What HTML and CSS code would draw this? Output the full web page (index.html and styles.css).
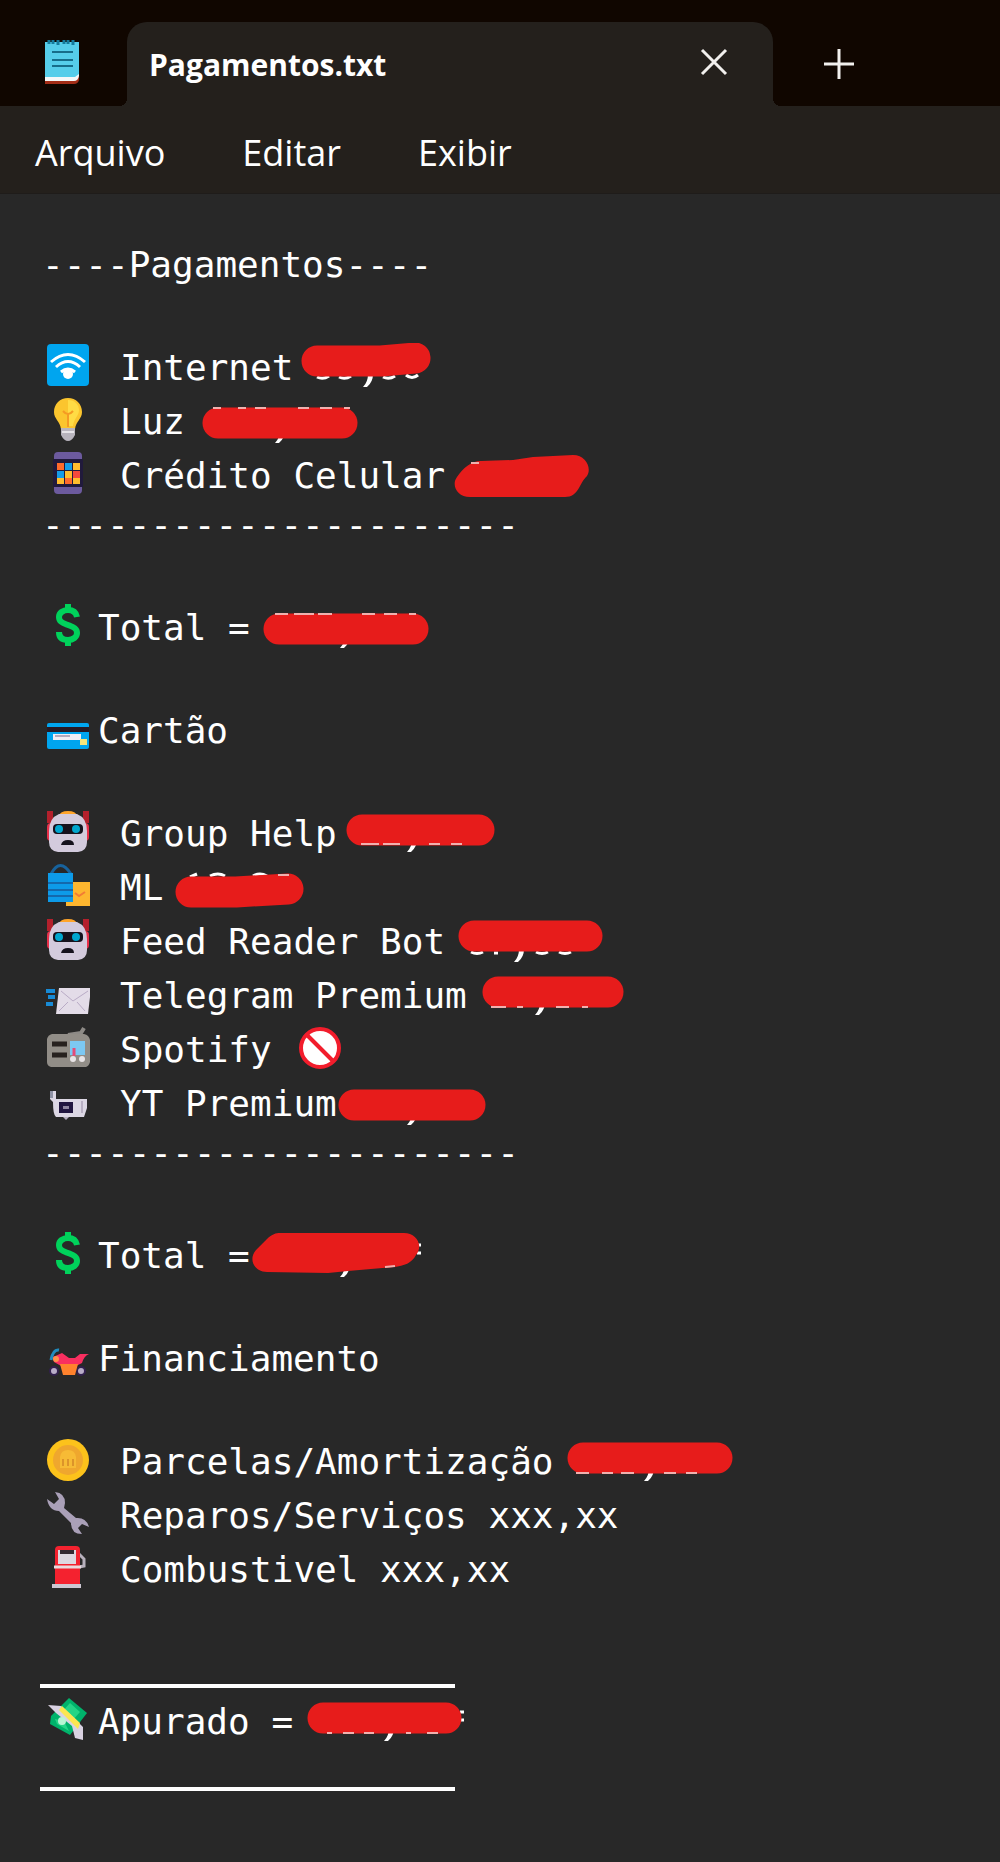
FILE: index.html
```html
<!DOCTYPE html>
<html lang="pt-BR">
<head>
  <meta charset="UTF-8" />
  <meta name="viewport" content="width=device-width, initial-scale=1" />
  <title>Pagamentos.txt</title>
  <link rel="stylesheet" href="styles.css">
</head>
<body>
  <!-- shared emoji -->
  <svg class="defs" aria-hidden="true">
    <symbol id="dollar" viewBox="0 0 44 44">
      <path d="M22 1v7M22 37v6" stroke="#00d25b" stroke-width="6"/>
      <path d="M31 14c-1-5-4-7-9-7s-9 3-9 7c0 5 4 6 9 8s9 3 9 8c0 4-4 7-9 7s-9-2-9-8" fill="none" stroke="#00d25b" stroke-width="6"/>
    </symbol>
    <symbol id="robot" viewBox="0 0 44 44">
      <path d="M1 2h6v12H1zM37 2h6v12h-6z" fill="#b3202c"/>
      <rect x="1" y="14" width="42" height="18" rx="4" fill="#e8304a"/>
      <path d="M13 7q1-5 9-5t9 5z" fill="#ffa52b"/>
      <path d="M13 5h18q10 4 10 17v11q0 9-9 10H12q-9-1-9-10V22Q3 9 13 5z" fill="#d3cbdd"/>
      <rect x="7" y="15" width="30" height="10" rx="4" fill="#15121d"/>
      <circle cx="13" cy="20" r="4" fill="#00a6ce"/>
      <circle cx="30" cy="20" r="4" fill="#00a6ce"/>
      <path d="M15 36q1-5 7-5t6 5z" fill="#15121d"/>
    </symbol>
    <symbol id="comma" viewBox="0 0 12 16">
      <path d="M6 0h5q0 8-6 13H1q5-5 5-13z" fill="#fff"/>
    </symbol>
  </svg>

  <header class="titlebar">
    <svg class="app-icon" viewBox="0 0 36 46" aria-hidden="true">
      <path d="M1 36h34v5q-1 4-5 4H1z" fill="#a32d17"/>
      <path d="M1 34h34v3q-1 5-5 5H1z" fill="#f5f7f8"/>
      <path d="M1 3h34v32l-4 3H1z" fill="#56cdea"/>
      <path d="M5 1v4M9 1v4M14 1v5M20 1v4M24 1v4M29 1v5" stroke="#147a9c" stroke-width="3"/>
      <path d="M8 13h21M8 21h21M8 27h21" stroke="#176c89" stroke-width="2"/>
    </svg>
    <div class="tab">
      <span class="tab-title">Pagamentos.txt</span>
      <button class="icon-btn" aria-label="Fechar guia">
        <svg viewBox="0 0 30 30"><path d="M3 3l24 24M27 3L3 27"/></svg>
      </button>
    </div>
    <button class="icon-btn new-tab" aria-label="Nova guia">
      <svg viewBox="0 0 30 30"><path d="M15 0v30M0 15h30"/></svg>
    </button>
  </header>

  <nav class="menubar">
    <button>Arquivo</button>
    <button>Editar</button>
    <button>Exibir</button>
  </nav>

  <main class="editor">
    <div class="line">----Pagamentos----</div>
    <div class="line"></div>
    <div class="line emoji">
      <svg class="icon" viewBox="0 0 44 44">
        <rect x="1" y="1" width="42" height="42" rx="4" fill="#00a5ef"/>
        <path d="M5 19q17-15 34 0M10 24q12-11 24 0M15 29q7-6 14 0" fill="none" stroke="#fff" stroke-width="3"/>
        <circle cx="22" cy="31" r="5" fill="#fff"/>
      </svg>
      <span class="item">Internet</span>
      <svg class="amount" viewBox="0 0 190 49">
        <path class="bit" d="M26 34q6 3 12-1M48 34q6 3 12-1M92 34q6 3 12-1M115 32q6 5 12 0"/>
        <use href="#comma" x="71" y="31" width="12" height="16"/>
        <path class="mark" d="M26 18H90L124 15"/>
      </svg>
    </div>
    <div class="line emoji">
      <svg class="icon" viewBox="0 0 44 44">
        <path d="M22 1c8 0 14 6 14 14 0 7-6 9-7 17H15C14 24 8 22 8 15 8 7 14 1 22 1z" fill="#fbc52e"/>
        <path d="M22 3c7 0 11 5 11 10 0 6-5 8-6 16h-5z" fill="#ffdc45"/>
        <path d="M17 14q5 6 10 0M22 16v14" fill="none" stroke="#f59b23" stroke-width="2"/>
        <path d="M15 31h14v7q-3 6-7 6t-7-6z" fill="#b8b4bd"/>
        <path d="M16 35h12" stroke="#e6e4e8" stroke-width="2"/>
      </svg>
      <span class="item">Luz</span>
      <svg class="amount" viewBox="0 0 190 49">
        <use href="#comma" x="91" y="33" width="12" height="16"/>
        <path class="mark" d="M35 26H159"/>
        <path class="bit soft" d="M30 11h8M55 11h8M72 11h11M115 11h11M137 11h12M161 11h6"/>
      </svg>
    </div>
    <div class="line emoji">
      <svg class="icon" viewBox="0 0 44 44">
        <rect x="8" y="1" width="28" height="42" rx="4" fill="#6c5a9e"/>
        <path d="M7 8h30v28H7z" fill="#211a3c"/>
        <path d="M11 12h7v7h-7zM19 27h7v6h-7z" fill="#ff6a2b"/>
        <path d="M19 12h7v7h-7zM11 20h7v7h-7z" fill="#159be8"/>
        <path d="M27 12h7v7h-7zM19 20h7v7h-7zM11 27h7v6h-7zM27 27h7v6h-7z" fill="#ffbd2e"/>
        <path d="M27 20h7v7h-7z" fill="#f4493c"/>
      </svg>
      <span class="item">Crédito Celular</span>
      <svg class="amount" viewBox="0 0 190 49">
        <path class="blob" d="M27 46C14 46 8 34 14 26C20 17 28 10 38 10L70 9L90 6L130 4C143 4 149 17 144 25C136 32 136 46 122 46Z"/>
        <path class="bit soft" d="M28 12h8"/>
      </svg>
    </div>
    <div class="line">----------------------</div>
    <div class="line"></div>
    <div class="line emoji">
      <svg class="icon"><use href="#dollar"/></svg>
      <span>Total =</span>
      <svg class="amount" viewBox="0 0 190 49">
        <use href="#comma" x="91" y="32" width="12" height="16"/>
        <path class="mark" d="M31 26H165"/>
        <path class="bit soft" d="M27 11h13M46 11h20M70 11h14M114 11h13M136 11h13M161 11h7"/>
      </svg>
    </div>
    <div class="line"></div>
    <div class="line emoji">
      <svg class="icon" viewBox="0 0 44 44">
        <rect x="1" y="17" width="42" height="26" rx="2" fill="#00a5ef"/>
        <path d="M1 21h42v5H1z" fill="#271a24"/>
        <path d="M7 28h28v6H7z" fill="#f1eef5"/>
        <path d="M9 30h15" stroke="#b3a9bd" stroke-width="2"/>
        <path d="M34 33h7v6h-7z" fill="#f4e57b"/>
      </svg>
      <span>Cartão</span>
    </div>
    <div class="line"></div>
    <div class="line emoji">
      <svg class="icon"><use href="#robot"/></svg>
      <span class="item">Group Help</span>
      <svg class="amount" viewBox="0 0 190 49">
        <use href="#comma" x="71" y="30" width="12" height="16"/>
        <path class="mark" d="M27 21H144"/>
        <path class="bit soft" d="M26 35h18M48 35h17M94 35h11M116 35h11"/>
      </svg>
    </div>
    <div class="line emoji">
      <svg class="icon" viewBox="0 0 44 44">
        <path d="M20 19h24v24H20z" fill="#fdb62f"/>
        <path d="M29 30l4 3 6-4" fill="none" stroke="#f27c35" stroke-width="2"/>
        <path d="M5 11Q14-6 25 11" fill="none" stroke="#17629c" stroke-width="3"/>
        <path d="M2 10h25v29H2z" fill="#0d9be9"/>
        <path d="M2 20h25M2 27h25M2 33h25" stroke="#1469ad" stroke-width="2"/>
      </svg>
      <span class="item">ML</span>
      <svg class="amount" viewBox="0 0 190 49">
        <path class="bit" d="M29 14l7-3M49 13q8-4 15 0M92 13q7-4 14 0"/>
        <use href="#comma" x="68" y="32" width="12" height="14"/>
        <path class="mark" d="M30 29H75L127 26"/>
        <path class="bit soft" d="M117 12h11"/>
      </svg>
    </div>
    <div class="line emoji">
      <svg class="icon"><use href="#robot"/></svg>
      <span class="item">Feed Reader Bot</span>
      <svg class="amount" viewBox="0 0 190 49">
        <path class="bit" d="M28 35q6 3 12 0M51 36h4M93 35q6 3 12 0M116 35q6 3 12 0"/>
        <use href="#comma" x="70" y="32" width="12" height="16"/>
        <path class="mark" d="M31 19H144"/>
      </svg>
    </div>
    <div class="line emoji">
      <svg class="icon" viewBox="0 0 44 44">
        <path d="M0 20h9M2 26h7M0 33h7" stroke="#188bd6" stroke-width="4"/>
        <path d="M13 17h32l-3 26H10z" fill="#e3dce8"/>
        <path d="M15 20l12 10 15-10M13 40l9-9M39 40l-8-9" fill="none" stroke="#b9abc6" stroke-width="1"/>
      </svg>
      <span class="item">Telegram Premium</span>
      <svg class="amount" viewBox="0 0 190 49">
        <use href="#comma" x="69" y="31" width="12" height="16"/>
        <path class="mark" d="M33 21H143"/>
        <path class="bit soft" d="M26 36h15M52 36h6M91 36h13M117 36h6"/>
      </svg>
    </div>
    <div class="line emoji">
      <svg class="icon" viewBox="0 0 44 44">
        <path d="M22 10l13-2 3-5" fill="none" stroke="#8d8a86" stroke-width="4"/>
        <path d="M6 9h32q5 1 6 6v22q-1 4-4 5H5q-4-1-4-5V14q1-4 5-5z" fill="#918d87"/>
        <path d="M6 19h15M6 30h15" stroke="#26211f" stroke-width="5"/>
        <path d="M24 16h15v14H24z" fill="#7cc8f2"/>
        <path d="M28 23v8" stroke="#e44b78" stroke-width="3"/>
        <circle cx="27" cy="34" r="3" fill="#e8e4e6"/>
        <circle cx="36" cy="34" r="3" fill="#e8e4e6"/>
      </svg>
      <span class="item">Spotify&nbsp;</span>
      <svg class="icon" viewBox="0 0 44 44">
        <circle cx="23" cy="23" r="19" fill="#fff" stroke="#f21d2c" stroke-width="4"/>
        <path d="M10 10l26 26" stroke="#f21d2c" stroke-width="4"/>
      </svg>
    </div>
    <div class="line emoji">
      <svg class="icon" viewBox="0 0 44 44">
        <path d="M4 12h6v8h31v9l-3 9H10q-3-2-3-15l-3-3z" fill="#dcd7e4"/>
        <path d="M4 12h3v7H4z" fill="#8e92a5"/>
        <path d="M15 25h10v7H15z" fill="#8f86a0" stroke="#211640" stroke-width="4"/>
        <path d="M36 22v12" stroke="#b9b0c4" stroke-width="2"/>
        <path d="M17 38l3 3 3-3z" fill="#b5adbf"/>
      </svg>
      <span class="item">YT Premium</span>
      <svg class="amount" viewBox="0 0 190 49">
        <use href="#comma" x="71" y="33" width="12" height="16"/>
        <path class="mark" d="M19 26H135"/>
      </svg>
    </div>
    <div class="line">----------------------</div>
    <div class="line"></div>
    <div class="line emoji">
      <svg class="icon"><use href="#dollar"/></svg>
      <span>Total =</span>
      <svg class="amount" viewBox="0 0 190 49">
        <use href="#comma" x="91" y="33" width="12" height="16"/>
        <path class="bit" d="M169 14h4M169 22h4"/>
        <path class="blob" d="M19 41C6 41 0 28 8 19L19 8C24 3 28 2 32 2H156C168 2 176 14 168 24C164 32 156 35 146 36L100 40L80 42Z"/>
        <path class="bit soft" d="M137 36l10-1"/>
      </svg>
    </div>
    <div class="line"></div>
    <div class="line emoji">
      <svg class="icon" viewBox="0 0 44 44">
        <path d="M13 16q-6-1-8 10" fill="none" stroke="#208bbd" stroke-width="3"/>
        <circle cx="8" cy="37" r="4" fill="#b9adc8" stroke="#32204d" stroke-width="2"/>
        <circle cx="35" cy="37" r="4" fill="#b9adc8" stroke="#32204d" stroke-width="2"/>
        <path d="M7 23l9-4 7 5h6l5-4h9q-5 2-7 9l-8 4H17l-9-5z" fill="#f92f60"/>
        <path d="M14 30h18l-3 11H17z" fill="#ff822d"/>
        <circle cx="10" cy="25" r="3" fill="#ff914a"/>
      </svg>
      <span>Financiamento</span>
    </div>
    <div class="line"></div>
    <div class="line emoji">
      <svg class="icon" viewBox="0 0 44 44">
        <circle cx="22" cy="23" r="21" fill="#fcc21b"/>
        <circle cx="22" cy="23" r="15" fill="#efa72e"/>
        <path d="M14 31V20q1-7 8-7t8 7v11z" fill="#f7bb35"/>
        <path d="M17 22v7M22 22v7M27 22v7" stroke="#dc942a" stroke-width="2"/>
      </svg>
      <span class="item">Parcelas/Amortização</span>
      <svg class="amount" viewBox="0 0 190 49">
        <use href="#comma" x="92" y="31" width="12" height="16"/>
        <path class="mark" d="M32 21H166"/>
        <path class="bit soft" d="M25 36h13M51 36h11M70 36h13M113 36h12M135 36h11"/>
      </svg>
    </div>
    <div class="line emoji">
      <svg class="icon" viewBox="0 0 44 44">
        <path d="M9 1q10 1 10 11l-1 5 12 10q10-1 13 9l-7-3-4 4 4 6q-11 0-11-11L13 20Q3 20 1 8l7 5 5-5z" fill="#aaa0b8"/>
      </svg>
      <span class="item">Reparos/Serviços xxx,xx</span>
    </div>
    <div class="line emoji">
      <svg class="icon" viewBox="0 0 44 44">
        <path d="M33 9l5 5v7l-5 1" fill="none" stroke="#b7b0bc" stroke-width="3"/>
        <path d="M9 5q0-4 4-4h17q4 0 4 4v35H9z" fill="#f4222f"/>
        <path d="M12 5h18v14H12z" fill="#ddd8e0"/>
        <path d="M14 5h14v4H14z" fill="#332a31"/>
        <path d="M8 22h27" stroke="#eadadd" stroke-width="3"/>
        <path d="M6 39h29v4H6z" fill="#cdc7d2"/>
      </svg>
      <span class="item">Combustivel xxx,xx</span>
    </div>
    <div class="line"></div>
    <div class="line"><hr></div>
    <div class="line emoji">
      <svg class="icon" viewBox="0 0 44 44">
        <path d="M23 1l18 15-17 22L4 27l1-8z" fill="#00b36b"/>
        <path d="M24 6l10 9-8 9-11-8zM9 22l9 2 5 10-12-7z" fill="#23d586"/>
        <path d="M2 8l13 1 16 15 6 6v13l-8-2-3-12L10 16z" fill="#d9d2e2"/>
        <path d="M16 9l18 17-2 6-19-19z" fill="#fce651"/>
        <circle cx="16" cy="24" r="4" fill="#b8f5d4"/>
      </svg>
      <span>Apurado =</span>
      <svg class="amount" viewBox="0 0 190 49">
        <use href="#comma" x="92" y="31" width="12" height="16"/>
        <path class="bit" d="M169 15h4M169 23h4"/>
        <path class="mark" d="M32 21H155"/>
        <path class="bit soft" d="M36 36h5M52 36h11M73 36h10M115 36h5M136 36h11"/>
      </svg>
    </div>
    <div class="line"><hr></div>
  </main>
</body>
</html>
```
FILE: styles.css
```css
* { box-sizing: border-box; }

body {
  margin: 0;
  min-height: 100vh;
  background: #282828;
  color: #fff;
  font-family: "Open Sans", "Noto Sans", sans-serif;
}

button {
  background: none;
  border: none;
  padding: 0;
  color: inherit;
  font: inherit;
  cursor: pointer;
}

.defs {
  position: absolute;
  width: 0;
  height: 0;
}

/* title bar */
.titlebar {
  display: flex;
  align-items: center;
  height: 106px;
  padding: 22px 44px 0;
  background: #100600;
}

.app-icon {
  width: 36px;
  height: 46px;
  margin-right: 47px;
  margin-bottom: 4px;
}

.tab {
  position: relative;
  display: flex;
  align-items: center;
  justify-content: space-between;
  flex: 0 1 646px;
  height: 84px;
  padding: 0 44px 4px 22px;
  background: #24201c;
  border-radius: 20px 20px 0 0;
}

/* curved feet of the tab */
.tab::before,
.tab::after {
  content: "";
  position: absolute;
  bottom: 0;
  width: 8px;
  height: 8px;
}

.tab::before {
  right: 100%;
  background: radial-gradient(circle at 0 0, #100600 8px, #24201c 8px);
}

.tab::after {
  left: 100%;
  background: radial-gradient(circle at 100% 0, #100600 8px, #24201c 8px);
}

.tab-title {
  padding-top: 4px;
  font-size: 30px;
  font-weight: 700;
}

.icon-btn {
  display: flex;
}

.icon-btn svg {
  width: 30px;
  height: 30px;
  fill: none;
  stroke: #f2f0ee;
  stroke-width: 3;
}

.new-tab {
  margin-left: 51px;
}

/* menu */
.menubar {
  display: flex;
  align-items: center;
  gap: 77px;
  height: 88px;
  padding: 5px 35px 0;
  background: #24201c;
  border-bottom: 1px solid #1f1c1a;
  font-size: 36px;
}

/* text area */
.editor {
  padding: 46px 42px 24px;
  font-family: "DejaVu Sans Mono", monospace;
  font-size: 36px;
  line-height: 49px;
  white-space: nowrap;
}

.line {
  display: flex;
  align-items: flex-start;
  min-height: 49px;
}

.line.emoji {
  padding-top: 5px;
}

.item {
  padding-left: 22px;
}

.icon {
  flex: none;
  width: 44px;
  height: 44px;
  margin: 0 8px 0 4px;
}

.line hr {
  width: 415px;
  height: 4px;
  margin: 41px 0 0 -2px;
  border: none;
  background: #fff;
}

/* marker strokes over the values */
.amount {
  flex: none;
  width: 190px;
  height: 49px;
  margin-left: -2px;
}

.mark {
  fill: none;
  stroke: #e71c1b;
  stroke-width: 31;
  stroke-linecap: round;
  stroke-linejoin: round;
}

.blob { fill: #e71c1b; }

.bit {
  fill: none;
  stroke: #fff;
  stroke-width: 3;
}

.bit.soft {
  stroke: #f0b0ae;
  stroke-width: 2;
}
```
